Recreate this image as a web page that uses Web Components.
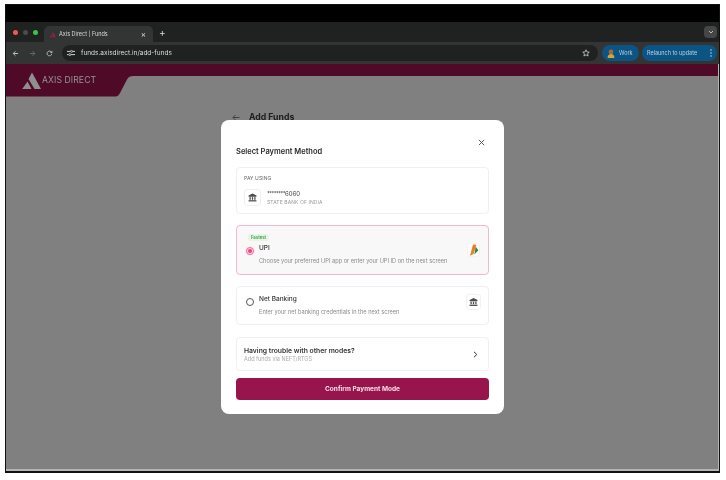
<!DOCTYPE html>
<html>
<head>
<meta charset="utf-8">
<title>Axis Direct | Funds</title>
<style>
  html, body { margin: 0; background: #fff; }
  body { width: 726px; height: 480px; overflow: hidden; font-family: Inter, "Liberation Sans", sans-serif; }
</style>
</head>
<body>
<browser-window>
  <axis-page></axis-page>
</browser-window>

<script>
const BANK_ICON = `<svg viewBox="0 0 16 16" width="100%" height="100%" style="display:block" fill="#4a4a4a"><path d="M8 .8 15 4.600v2H1v-2z"/><rect x="2.600" y="7.400" width="2.300" height="4.600"/><rect x="6.850" y="7.400" width="2.300" height="4.600"/><rect x="11.100" y="7.400" width="2.300" height="4.600"/><rect x="1" y="12.800" width="14" height="2.200"/></svg>`;

class BrowserWindow extends HTMLElement {
    constructor() {
        super();
        this.attachShadow({ mode: 'open' });
        this.shadowRoot.innerHTML = `
            <style>
                :host { display: block; width: 726px; height: 480px; padding: 4px 6px 7px 5px; box-sizing: border-box; filter: blur(0.5px); }
                .frame { height: 100%; box-sizing: border-box; border: 1px solid #111; border-bottom-width: 2px; background: #808080; display: flex; flex-direction: column; font-family: Inter, "Liberation Sans", sans-serif; box-shadow: inset -1px -2px 0 #b4b4b4; }
                .menubar { height: 17px; background: #000; flex: none; }
                .tabs { height: 20px; background: #202221; flex: none; display: flex; align-items: flex-end; padding-left: 7px; color: #d8dad9; }
                .lights { display: flex; gap: 5px; align-self: center; margin-right: 6px; }
                .lights i { width: 5px; height: 5px; border-radius: 50%; display: block; }
                .tab { width: 109px; height: 16px; background: #323534; border-radius: 5px 5px 0 0; display: flex; align-items: center; padding: 0 7px 0 5px; box-sizing: border-box; font-size: 5.5px; gap: 3px; }
                .tab span { flex: 1; }
                .tab b { font-size: 8px; font-weight: 400; line-height: 1; }
                .plus { align-self: center; margin-left: 6px; font-size: 10px; line-height: 1; }
                .chev { margin-left: auto; margin-right: 2px; align-self: center; width: 13px; height: 12px; border-radius: 4px; background: #444746; display: flex; align-items: center; justify-content: center; }
                .bar { height: 22px; background: #323534; flex: none; display: flex; align-items: center; padding: 0 2px 0 6px; color: #cfd1d0; }
                .nav { display: flex; gap: 10px; font-size: 8px; width: 50px; align-items: center; }
                .nav svg { display: block; }
                .url { flex: 1; height: 16px; border-radius: 8px; background: #202221; display: flex; align-items: center; font-size: 6.5px; padding: 0 8px 0 5px; gap: 6px; color: #dcdedd; }
                .url span { flex: 1; }
                .pill { height: 16px; border-radius: 8px; background: #0b5484; color: #b9d2e3; font-size: 5.5px; display: flex; align-items: center; box-sizing: border-box; }
                .work { width: 37px; margin-left: 4px; padding-left: 5px; gap: 4px; }
                .relaunch { width: 75px; margin-left: 3px; padding: 0 5px 0 5px; justify-content: space-between; white-space: nowrap; }
                .avatar { width: 8px; height: 9px; display: block; }
                .content { flex: 1; position: relative; min-height: 0; }
            </style>
            <div class="frame">
                <div class="menubar"></div>
                <div class="tabs">
                    <div class="lights"><i style="background:#ee5a52"></i><i style="background:#4a4c4b"></i><i style="background:#34c749"></i></div>
                    <div class="tab">
                        <svg width="7" height="7" viewBox="0 0 10 10"><path d="M5.4 1 9.6 9H6.6L4.6 5z M4 6l1.3 3H.6z" fill="#a31a4d"/></svg>
                        <span>Axis Direct | Funds</span><b>&times;</b>
                    </div>
                    <div class="plus">+</div>
                    <div class="chev"><svg width="6" height="4" viewBox="0 0 6 4"><path d="M1 1l2 2 2-2" fill="none" stroke="#bbb" stroke-width="1"/></svg></div>
                </div>
                <div class="bar">
                    <div class="nav">
                        <svg width="7" height="7" viewBox="0 0 8 8"><path d="M7 4H1.5M4 1.4 1.4 4 4 6.6" fill="none" stroke="#cfd1d0"/></svg>
                        <svg width="7" height="7" viewBox="0 0 8 8"><path d="M1 4h5.5M4 1.4 6.6 4 4 6.6" fill="none" stroke="#6f7170"/></svg>
                        <svg width="7" height="7" viewBox="0 0 8 8"><path d="M6.6 4.4A2.7 2.7 0 1 1 5.8 2L6.8 3V1M6.8 3H5" fill="none" stroke="#cfd1d0" stroke-width=".9"/></svg>
                    </div>
                    <div class="url">
                        <svg width="8" height="8" viewBox="0 0 8 8"><path d="M0 2.4h3.6M5.6 2.4H8M0 5.6h1.6M4 5.6h4" stroke="#cfd1d0" fill="none"/><circle cx="4.6" cy="2.4" r="1" fill="none" stroke="#cfd1d0" stroke-width=".8"/><circle cx="2.8" cy="5.6" r="1" fill="none" stroke="#cfd1d0" stroke-width=".8"/></svg>
                        <span>funds.axisdirect.in/add-funds</span>
                        <svg width="8" height="8" viewBox="0 0 10 10"><path d="M5 1l1.2 2.7 2.9.3-2.2 1.9.7 2.9L5 7.3 2.4 8.8l.7-2.9L.9 4l2.9-.3z" fill="none" stroke="#cfd1d0"/></svg>
                    </div>
                    <div class="pill work">
                        <svg class="avatar" viewBox="0 0 8 9"><circle cx="4" cy="3" r="2.4" fill="#a56a35"/><path d="M.6 9c0-3 1.4-4 3.4-4s3.400 1 3.400 4z" fill="#d8a23f"/></svg>
                        Work
                    </div>
                    <div class="pill relaunch">Relaunch to update <svg width="2" height="8" viewBox="0 0 2 8"><circle cx="1" cy="1" r=".8" fill="#b9d2e3"/><circle cx="1" cy="4" r=".8" fill="#b9d2e3"/><circle cx="1" cy="7" r=".8" fill="#b9d2e3"/></svg></div>
                </div>
                <div class="content"><slot></slot></div>
            </div>
        `;
    }
}

class AxisPage extends HTMLElement {
    constructor() {
        super();
        this.attachShadow({ mode: 'open' });
        this.shadowRoot.innerHTML = `
            <style>
                :host { display: block; position: absolute; inset: 0 1px 2px 0; overflow: hidden; }
                .head { height: 33px; position: relative; }
                .head svg.band { display: block; width: 100%; height: 33px; }
                .logo { position: absolute; left: 15px; top: 7px; display: flex; align-items: flex-start; gap: 1px; color: #959595; font-size: 8.6px; letter-spacing: .1px; }
                .logo span { margin-top: 4px; }
                .title { display: flex; align-items: center; gap: 9px; margin: 15px 0 0 226px; font-size: 8.7px; font-weight: 700; color: #1e1e1e; }
                .modal-wrap { position: absolute; left: 215px; top: 56px; }
            </style>
            <div class="head">
                <svg class="band" viewBox="0 0 712 33" preserveAspectRatio="none"><path d="M0 0H712V12H128C124 12 122.500 13 121 15.500L114 29C112.500 32 111 32.500 108 32.500H0z" fill="#4e0a26"/></svg>
                <div class="logo">
                    <svg width="20" height="20" viewBox="0 0 20 20"><path d="M11 1.500 20 18H13.500L7.500 8z" fill="#8f8f8f"/><path d="M6.500 10.500 10.500 18H1.200z" fill="#8f8f8f"/></svg>
                    <span>AXIS DIRECT</span>
                </div>
            </div>
            <div class="title">
                <svg width="8" height="7" viewBox="0 0 8 7"><path d="M7.500 3.500H1M3.500 1 1 3.500 3.500 6" fill="none" stroke="#333" stroke-width=".8"/></svg>
                Add Funds
            </div>
            <div class="modal-wrap"><payment-modal></payment-modal></div>
        `;
    }
}

class PaymentModal extends HTMLElement {
    constructor() {
        super();
        this.attachShadow({ mode: 'open' });
        this.shadowRoot.innerHTML = `
            <style>
                :host { display: block; width: 283px; height: 294px; background: #fff; border-radius: 8px; box-sizing: border-box; padding: 27px 15px 0; position: relative; color: #2b2b2b; }
                .close { position: absolute; right: 19px; top: 19px; width: 7px; height: 7px; display: block; }
                h2 { margin: 0; font-size: 7.5px; line-height: 10px; font-weight: 600; color: #2a2a2a; }
                .stack { display: flex; flex-direction: column; margin-top: 10px; }
                .card { box-sizing: border-box; border: 1px solid #f0f0f0; border-radius: 4px; background: #fff; }
                .pay { height: 47px; padding: 7px 7px; }
                .lbl { font-size: 5px; line-height: 7px; color: #666; letter-spacing: .1px; }
                .acct { display: flex; align-items: center; gap: 6px; margin-top: 7px; }
                .ico { width: 17px; height: 17px; border: 1px solid #f0f0f0; border-radius: 3px; box-sizing: border-box; padding: 3px; background: #fff; flex: none; }
                .num { font-size: 6px; line-height: 8px; color: #444; }
                .num i { font-style: normal; letter-spacing: -.5px; font-size: 5.500px; }
                .bank { font-size: 5px; line-height: 7px; color: #999; margin-top: 1px; letter-spacing: .1px; }
                .trouble { height: 34px; margin-top: 12px; display: flex; align-items: center; justify-content: space-between; padding: 0 10px 0 7px; }
                .t1 { font-size: 6.800px; line-height: 9px; font-weight: 600; color: #333; }
                .t2 { font-size: 5.500px; line-height: 7px; color: #aaa; margin-top: 1px; }
                button { display: block; width: 253px; height: 21.500px; margin-top: 7px; border: 0; border-radius: 4px; background: #97144d; color: #f7dfe9; font: 700 6.500px Inter, "Liberation Sans", sans-serif; padding: 0; }
            </style>
            <svg class="close" viewBox="0 0 8 8"><path d="M1 1l6 6M7 1 1 7" stroke="#555" stroke-width="1.100"/></svg>
            <h2>Select Payment Method</h2>
            <div class="stack">
                <div class="card pay">
                    <div class="lbl">PAY USING</div>
                    <div class="acct">
                        <div class="ico">${BANK_ICON}</div>
                        <div>
                            <div class="num"><i>********</i>6060</div>
                            <div class="bank">STATE BANK OF INDIA</div>
                        </div>
                    </div>
                </div>
                <pay-option selected tag="Fastest" name="UPI" desc="Choose your preferred UPI app or enter your UPI ID on the next screen" icon="upi"></pay-option>
                <pay-option name="Net Banking" desc="Enter your net banking credentials in the next screen" icon="bank"></pay-option>
                <div class="card trouble">
                    <div>
                        <div class="t1">Having trouble with other modes?</div>
                        <div class="t2">Add funds via NEFT/RTGS</div>
                    </div>
                    <svg width="5" height="7" viewBox="0 0 5 7"><path d="M1 .8 3.800 3.500 1 6.200" fill="none" stroke="#333" stroke-width="1"/></svg>
                </div>
                <button>Confirm Payment Mode</button>
            </div>
        `;
    }
}

class PayOption extends HTMLElement {
    constructor() {
        super();
        this.attachShadow({ mode: 'open' });
    }

    connectedCallback() {
        const selected = this.hasAttribute('selected');
        const tag = this.getAttribute('tag');
        const icon = this.getAttribute('icon') === 'upi'
            ? `<svg viewBox="0 0 11 12" width="100%" height="100%" style="display:block"><path d="M5 .4 8.400 .8 5.600 10 2 11.800z" fill="#ee7d24"/><path d="M7.600 2.800 10.400 6.200 6.400 10.400z" fill="#2c8a3f"/></svg>`
            : BANK_ICON;
        this.shadowRoot.innerHTML = `
            <style>
                :host { display: block; box-sizing: border-box; margin-top: 11px; height: ${selected ? 50 : 39}px; border: 1px solid ${selected ? '#f7b6cf' : '#f0f0f0'}; border-radius: 4px; background: ${selected ? '#f8f8f8' : '#fff'}; }
                .row { display: flex; align-items: flex-start; padding: 0 ${selected ? 8 : 7}px 0 9px; }
                .radio { width: 8px; height: 8px; border-radius: 50%; border: 1px solid ${selected ? '#ef6f9f' : '#555'}; box-sizing: border-box; flex: none; display: flex; align-items: center; justify-content: center; background: ${selected ? '#fbd5e3' : '#fff'}; margin-top: ${selected ? 21 : 11}px; box-shadow: ${selected ? '0 0 0 1px #fde6ef' : 'none'}; }
                .radio i { width: 4px; height: 4px; border-radius: 50%; background: #e8457f; display: ${selected ? 'block' : 'none'}; }
                .body { flex: 1; margin-left: 5px; padding-top: 8px; }
                .tag { display: block; width: 21px; height: 7px; margin: 0 0 3px -11px; background: #e6f5e4; color: #3f9a4f; font-size: 4.300px; line-height: 7px; text-align: center; border-radius: 2px; font-weight: 600; }
                .name { font-size: 6.500px; line-height: 8px; color: #333; font-weight: 500; }
                .desc { font-size: 5.650px; line-height: 7px; color: #8a8a8a; margin-top: 5.500px; }
                .ico { width: ${selected ? 13 : 15}px; height: ${selected ? 14 : 16}px; margin-top: ${selected ? 17 : 7}px; border: 1px solid #f2f2f2; border-radius: 3px; box-sizing: border-box; padding: ${selected ? 0 : 2}px; background: #fff; flex: none; }
            </style>
            <div class="row">
                <div class="radio"><i></i></div>
                <div class="body">
                    ${tag ? `<span class="tag">${tag}</span>` : ''}
                    <div class="name">${this.getAttribute('name')}</div>
                    <div class="desc">${this.getAttribute('desc')}</div>
                </div>
                <div class="ico">${icon}</div>
            </div>
        `;
    }
}

customElements.define('browser-window', BrowserWindow);
customElements.define('axis-page', AxisPage);
customElements.define('payment-modal', PaymentModal);
customElements.define('pay-option', PayOption);
</script>
</body>
</html>
